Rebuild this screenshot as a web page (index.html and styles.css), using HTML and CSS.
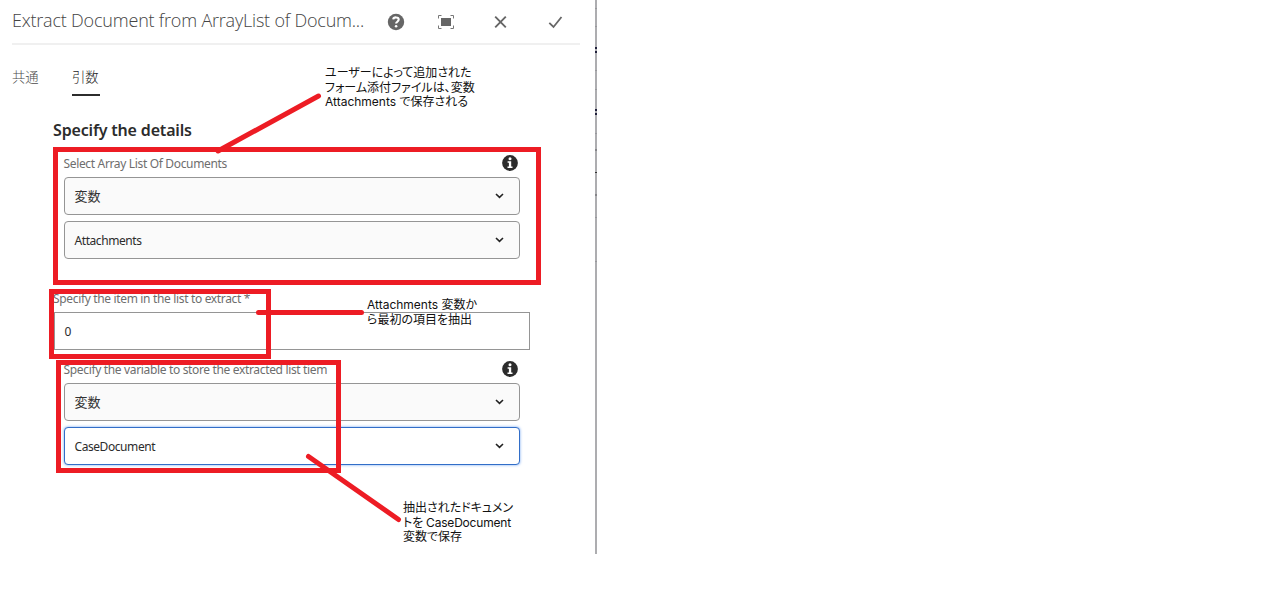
FILE: index.html
```html
<!DOCTYPE html>
<html lang="ja">
<head>
<meta charset="utf-8">
<title>Extract Document</title>
<link rel="stylesheet" href="styles.css">
</head>
<body>
<main class="panel">
  <header class="header">
    <h1 class="title"><span>Extract Document from ArrayList of Docum...</span></h1>
    <div class="actions">
      <svg class="icon" viewBox="0 0 18 18"><circle cx="9" cy="9" r="8.2" fill="#666"/><path d="M6.2 6.3C6.6 3.8 11.7 3.7 11.7 6.6c0 2-2.6 2.2-2.6 4" fill="none" stroke="#fff" stroke-width="2.1"/><circle cx="9.1" cy="13.2" r="1.3" fill="#fff"/></svg>
      <svg class="icon" viewBox="0 0 18 18"><path d="M4 5h10v8H4z" fill="#666"/><path d="M1.500 5.500V2.500H4.500M13.500 2.500H16.500V5.500M16.500 12.500V15.500H13.500M4.500 15.500H1.500V12.500" fill="none" stroke="#777"/></svg>
      <svg class="icon" viewBox="0 0 18 18"><path d="M3.200 3.700l10.600 10.600M13.800 3.700L3.200 14.300" fill="none" stroke="#666" stroke-width="1.900"/></svg>
      <svg class="icon" viewBox="0 0 18 18"><path d="M2.300 9.800l4.200 4.200L14.500 4" fill="none" stroke="#666" stroke-width="1.800"/></svg>
    </div>
  </header>
  <nav class="tabs">
    <a class="tab">共通</a>
    <a class="tab active">引数</a>
  </nav>
  <section class="form">
    <h2 class="heading"><span>Specify the details</span></h2>
    <div class="group">
      <div class="caption"><label class="label">Select Array List Of Documents</label>
        <svg class="info" viewBox="0 0 16 16"><circle cx="8" cy="8" r="7.900" fill="#2c2c2c"/><circle cx="8" cy="3.800" r="1.500" fill="#fff"/><path d="M5.600 6.300H9.200V11.500H10.500V13H5.500V11.500H6.900V7.800H5.600z" fill="#fff"/></svg></div>
      <div class="select"><span class="cjk">変数</span><svg class="chevron" viewBox="0 0 9 6"><path d="M1 1l3.500 3.300L8 1" /></svg></div>
      <div class="select"><span class="value">Attachments</span><svg class="chevron" viewBox="0 0 9 6"><path d="M1 1l3.500 3.300L8 1" /></svg></div>
    </div>
    <div class="field">
      <label class="label">Specify the item in the list to extract *</label>
      <div class="input">0</div>
    </div>
    <div class="group">
      <div class="caption"><label class="label">Specify the variable to store the extracted list tiem</label>
        <svg class="info" viewBox="0 0 16 16"><circle cx="8" cy="8" r="7.900" fill="#2c2c2c"/><circle cx="8" cy="3.800" r="1.500" fill="#fff"/><path d="M5.600 6.300H9.200V11.500H10.500V13H5.500V11.500H6.900V7.800H5.600z" fill="#fff"/></svg></div>
      <div class="select"><span class="cjk">変数</span><svg class="chevron" viewBox="0 0 9 6"><path d="M1 1l3.500 3.300L8 1" /></svg></div>
      <div class="select focused"><span class="value">CaseDocument</span><svg class="chevron" viewBox="0 0 9 6"><path d="M1 1l3.500 3.300L8 1" /></svg></div>
    </div>
  </section>
  <svg class="marks" viewBox="0 0 597 554">
    <g fill="none" stroke="#ed1c24" stroke-width="5">
      <path d="M55.500 149.500H538.500V282.500H55.500z"/>
      <path d="M51.500 291.500H268.500V356.500H51.500z"/>
      <path d="M58.500 362.500H338.500V470.500H58.500z"/>
      <path d="M218 151L318.500 96M258.500 312.500H361.500M308.500 456.500L398.500 519.500" stroke-linecap="round"/>
    </g>
    <g shape-rendering="crispEdges">
      <path d="M595 47h2v2h-2zM595 51h2v2h-2zM595 109h2v2h-2zM595 113h2v2h-2z" fill="#20203c"/>
      <path d="M595 149h2v2h-2zM595 194h2v2h-2z" fill="#858589"/>
      <path d="M595 8h2v1h-2zM595 26h2v1h-2zM595 70h2v1h-2zM595 89h2v1h-2zM595 133h2v1h-2zM595 217h2v1h-2zM595 261h2v1h-2z" fill="#97979b"/>
      <path d="M595 172h2v1h-2z" fill="#333"/>
    </g>
  </svg>
  <p class="note n1"><span>ユーザーによって追加された</span><br><span>フォーム添付ファイルは、変数</span><br><span>Attachments で保存される</span></p>
  <p class="note n2"><span>Attachments 変数か</span><br><span>ら最初の項目を抽出</span></p>
  <p class="note n3"><span>抽出されたドキュメン</span><br><span class="tight">トを CaseDocument</span><br><span>変数で保存</span></p>
</main>
</body>
</html>
```
FILE: styles.css
```css
* { box-sizing: border-box; }
body { margin: 0; background: #fff; font-family: "Noto Sans", "Noto Sans CJK JP", sans-serif; }
.panel { position: relative; width: 597px; height: 554px; border-right: 2px solid #adadb0; }
.header { display: flex; justify-content: space-between; height: 45px; margin: 0 15px 0 12px; border-bottom: 2px solid #f0f0f0; }
.title { margin: 0; font: 300 18px/40px "Open Sans", sans-serif; color: #444; white-space: nowrap; letter-spacing: -0.2px; }
.actions { display: grid; grid-template-columns: 50px 55px 55px 18px; padding: 13px 15px 0 0; }
.icon { width: 18px; height: 18px; }
.tabs { display: flex; gap: 33px; padding: 20px 12px 0; height: 51px; font: 300 13.3px/23px "Noto Sans CJK JP", sans-serif; color: #4b4b4b; }
.tab { width: 27px; height: 31px; }
.tab.active { width: 28px; border-bottom: 2px solid #2c2c2c; color: #1c1c1c; }
.form { width: 530px; padding: 21px 0 0 53px; }
.heading { margin: 0; font: 600 16px/26px "Noto Sans", sans-serif; color: #2c2c2c; white-space: nowrap; letter-spacing: -0.17px; }
.group { display: grid; grid-template-rows: 16px 38px 38px; row-gap: 6px; padding: 12px 10px 0 11px; }
.caption { display: flex; justify-content: space-between; padding-right: 2px; margin-left: -0.5px; }
.label { font-size: 12px; line-height: 17px; color: #6e6e6e; white-space: nowrap; letter-spacing: -0.34px; }
.info { width: 16px; height: 16px; }
.select { display: flex; align-items: center; justify-content: space-between; padding: 0 15px 0 9.5px; border: 1px solid #959595; border-radius: 4px; background: #fafafa; font-size: 12px; color: #2c2c2c; }
.value { letter-spacing: -0.43px; }
.cjk { padding-bottom: 1px; font: 400 13px/20px "Noto Sans CJK JP", sans-serif; color: #333; }
.focused { background: #fff; border-color: #326ec8; box-shadow: 0 0 3px #73a5f0; }
.chevron { width: 9px; height: 6px; fill: none; stroke: #222; stroke-width: 1.6; }
.field { padding-top: 31px; }
.field .label { display: block; height: 22px; }
.input { width: 476px; height: 38px; margin-left: 1px; padding-left: 9.5px; border: 1px solid #959595; font-size: 12px; line-height: 37px; color: #2c2c2c; }
.field + .group { padding-top: 11px; }
.marks { position: absolute; top: 0; left: 0; width: 597px; height: 554px; }
.note { position: absolute; margin: 0; font: 12px/14.5px Inter, "Noto Sans CJK JP", sans-serif; color: #111; white-space: nowrap; font-feature-settings: "palt"; }
.tight { letter-spacing: -0.2px; }
.n1 { left: 325px; top: 66px; }
.n2 { left: 367px; top: 298px; }
.n3 { left: 403px; top: 501px; }
```
